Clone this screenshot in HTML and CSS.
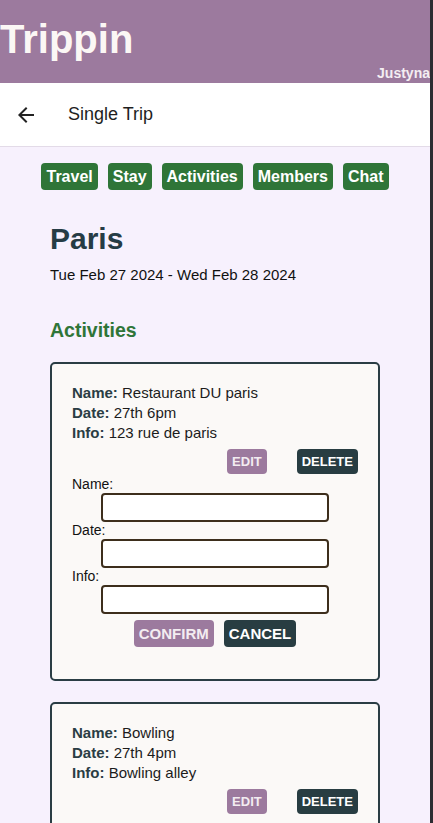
FILE: index.html
```html
<!DOCTYPE html>
<html>
<head>
<meta charset="utf-8">
<link rel="stylesheet" href="styles.css">
</head>
<body>
<div class="page">
  <header class="brand">
    <h1 class="brand-title">Trippin</h1>
    <div class="brand-user">Justyna</div>
  </header>
  <div class="toolbar">
    <svg class="back" viewBox="0 0 24 24" width="24" height="24"><path d="M20 11H7.83l5.59-5.59L12 4l-8 8 8 8 1.41-1.41L7.83 13H20v-2z" fill="#222"/></svg>
    <span class="toolbar-title">Single Trip</span>
  </div>
  <main class="content">
    <nav class="tabs">
      <span class="tab">Travel</span>
      <span class="tab">Stay</span>
      <span class="tab">Activities</span>
      <span class="tab">Members</span>
      <span class="tab">Chat</span>
    </nav>
    <section class="trip">
      <h2 class="trip-name">Paris</h2>
      <p class="trip-dates">Tue Feb 27 2024 - Wed Feb 28 2024</p>
      <h3 class="section-title">Activities</h3>

      <div class="card">
        <div class="info"><b>Name:</b> Restaurant DU paris</div>
        <div class="info"><b>Date:</b> 27th 6pm</div>
        <div class="info"><b>Info:</b> 123 rue de paris</div>
        <div class="actions">
          <button class="btn btn-purple">EDIT</button>
          <button class="btn btn-dark">DELETE</button>
        </div>
        <form class="edit-form">
          <label class="lbl">Name:</label>
          <input class="field" type="text">
          <label class="lbl">Date:</label>
          <input class="field" type="text">
          <label class="lbl">Info:</label>
          <input class="field" type="text">
          <div class="form-actions">
            <button type="button" class="btn2 btn-purple">CONFIRM</button>
            <button type="button" class="btn2 btn-dark">CANCEL</button>
          </div>
        </form>
      </div>

      <div class="card">
        <div class="info"><b>Name:</b> Bowling</div>
        <div class="info"><b>Date:</b> 27th 4pm</div>
        <div class="info"><b>Info:</b> Bowling alley</div>
        <div class="actions">
          <button class="btn btn-purple">EDIT</button>
          <button class="btn btn-dark">DELETE</button>
        </div>
      </div>
    </section>
  </main>
</div>
<div class="edge"></div>
</body>
</html>
```

FILE: styles.css
```css
* { box-sizing: border-box; }
html, body {
  margin: 0;
  padding: 0;
  background: #f7f1fd;
  font-family: "Liberation Sans", Arial, sans-serif;
  color: #1c1c1c;
}
body { overflow: hidden; height: 823px; }
.page { width: 430px; }
.edge {
  position: fixed;
  top: 0;
  right: 0;
  width: 3px;
  height: 100%;
  background: #2c2c31;
}
.brand {
  background: #9c7a9e;
  height: 83px;
}
.brand-title {
  margin: 0;
  padding-top: 16px;
  font-size: 40px;
  line-height: 46px;
  font-weight: 700;
  color: #fbf7f5;
}
.brand-user {
  text-align: right;
  font-size: 14px;
  font-weight: 700;
  color: #f4eef2;
  line-height: 16px;
  margin-top: 3px;
}
.toolbar {
  background: #fff;
  height: 64px;
  border-bottom: 1px solid #e3dbe8;
  display: flex;
  align-items: center;
  padding-left: 14px;
}
.back { display: block; }
.toolbar-title {
  margin-left: 30px;
  font-size: 18px;
  color: #1e1e1e;
}
.content { padding-top: 16px; }
.tabs {
  display: flex;
  justify-content: center;
  gap: 10px;
}
.tab {
  background: #2f7538;
  color: #fff;
  font-weight: 700;
  font-size: 16px;
  line-height: 19px;
  padding: 4px 5px;
  border-radius: 4px;
}
.trip { padding: 0 50px; }
.trip-name {
  margin: 32px 0 0;
  font-size: 30px;
  line-height: 34px;
  color: #263c45;
}
.trip-dates {
  margin: 10px 0 0;
  font-size: 15px;
  line-height: 18px;
  color: #111;
}
.section-title {
  margin: 35px 0 0;
  font-size: 19.5px;
  line-height: 22px;
  color: #2f7538;
}
.card {
  margin-top: 21px;
  width: 330px;
  background: #fbf9f7;
  border: 2px solid #2a3d44;
  border-radius: 5px;
  padding: 19px 20px 32px;
  margin-bottom: 18px;
}
.info {
  font-size: 15px;
  line-height: 20px;
  color: #1c1c1c;
}
.info b { color: #2a3d44; }
.actions {
  display: flex;
  justify-content: flex-end;
  gap: 30px;
  margin-top: 6px;
}
.btn, .btn2 {
  border: none;
  border-radius: 4px;
  color: #fff;
  font-family: "Liberation Sans", Arial, sans-serif;
  font-weight: 700;
  cursor: pointer;
}
.btn {
  font-size: 13px;
  height: 25px;
  padding: 0 5px;
}
.btn2 {
  font-size: 15px;
  height: 27px;
  padding: 0 5px;
}
.btn-purple { background: #9c7a9e; color: #f3ecf1; }
.btn-dark { background: #283d42; }
.edit-form {
  display: flex;
  flex-direction: column;
  align-items: center;
  margin-top: 2px;
}
.lbl {
  align-self: flex-start;
  font-size: 14px;
  line-height: 17px;
  color: #111;
}
.field {
  width: 228px;
  height: 29px;
  border: 2px solid #3d2e1c;
  border-radius: 4px;
  background: #fff;
}
.form-actions {
  display: flex;
  gap: 10px;
  margin-top: 6px;
}
```
